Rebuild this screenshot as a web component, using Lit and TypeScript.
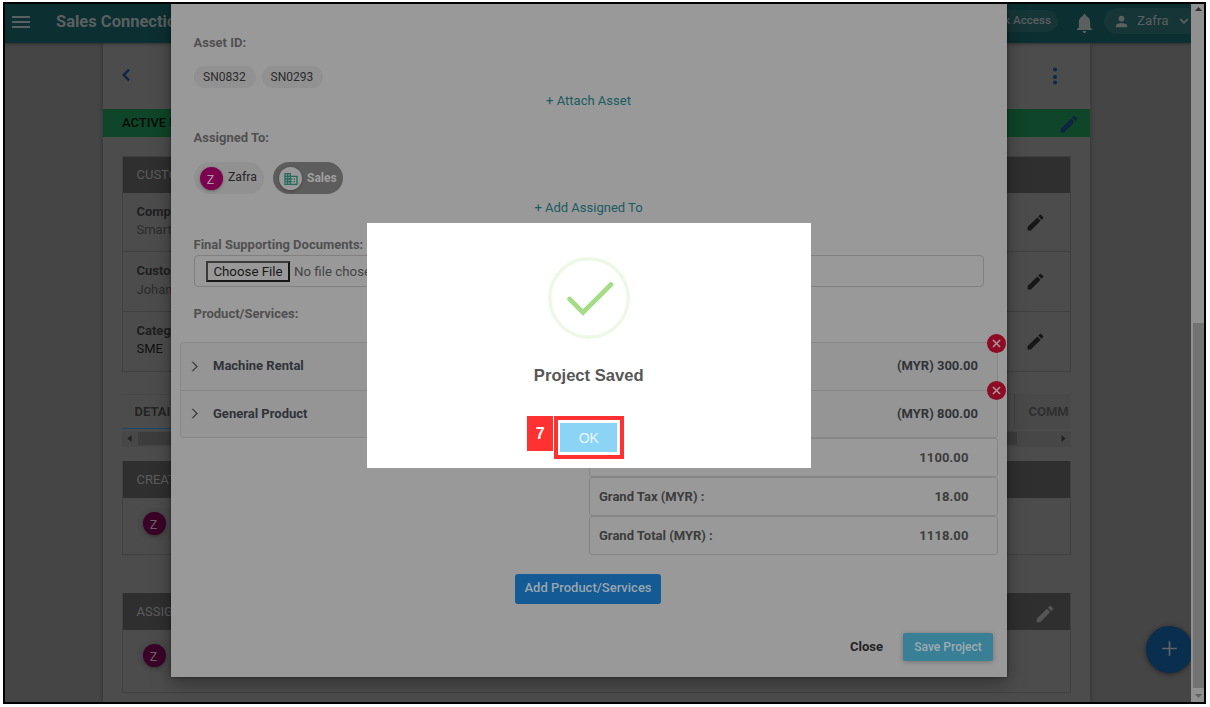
import { LitElement, html, css, svg } from "lit";
import { customElement } from "lit/decorators.js";

const pencilPath = "M3 17.25V21h3.75L17.81 9.94l-3.75-3.75L3 17.25zM20.71 7.04a1 1 0 0 0 0-1.41l-2.34-2.34a1 1 0 0 0-1.41 0l-1.83 1.83 3.75 3.75 1.83-1.83z";
const icon = (cls: string, path: string) =>
  html`<svg class=${"ic " + cls} viewBox="0 0 24 24">${svg`<path d=${path}></path>`}</svg>`;

@customElement("app-root")
export class AppRoot extends LitElement {
  static styles = css`
    :host { display: block; width: 1210px; height: 707px; box-sizing: border-box; padding: 2px 4px 3px 3px; background: #fff; overflow: hidden; font-family: Roboto, "Liberation Sans", sans-serif; font-size: 13px; color: #1d1d1d; }
    * { box-sizing: border-box; }
    .frame { position: relative; display: flex; width: 1203px; height: 702px; border: 2px solid #000; background: #454545; overflow: hidden; white-space: nowrap; }
    .ic { display: block; width: 20px; height: 20px; fill: currentColor; flex: none; }
    .view { position: relative; width: 1186px; height: 698px; overflow: hidden; flex: none; }
    .top { position: relative; display: flex; align-items: center; height: 39px; background: #0c2f31; color: #5a6061; box-shadow: 0 1px 3px rgba(0,0,0,.35); z-index: 1; }
    .burger { width: 18px; height: 12px; margin: 0 26px 4px 7px; border: solid #5a6061; border-width: 2px 0; display: flex; align-items: center; flex: none; }
    .burger i { display: block; height: 2px; width: 18px; background: #5a6061; }
    .brand { font-size: 16.5px; font-weight: 700; width: 870px; margin-bottom: 5px; flex: none; }
    .quick { width: 132px; text-align: right; height: 22px; line-height: 21px; border-radius: 11px; background: #163537; padding-right: 7px; margin-bottom: 5px; font-size: 11.6px; font-weight: 500; flex: none; }
    .bell { margin: 0 12px 1px 19px; width: 15px; height: 19px; }
    .user { display: flex; align-items: center; height: 26px; width: 96px; border-radius: 13px; background: #163537; padding-left: 9px; margin-bottom: 5px; font-size: 14px; flex: none; }
    .user .ic { width: 17px; height: 17px; }
    .user span { margin: 0 7px 2px 7px; font-size: 13.4px; }
    .user .dn { width: 16px; height: 16px; stroke: currentColor; }
    .sheet { width: 987px; height: 662px; margin-left: 98px; background: #4c4c4c; box-shadow: 0 0 5px rgba(0,0,0,.3); }
    .nav { display: flex; justify-content: space-between; align-items: center; height: 66px; padding: 0 23px 3px 11px; color: #0e2747; }
    .nav .ic { width: 24px; height: 24px; }
    .active { display: flex; align-items: center; justify-content: space-between; height: 28px; background: #0f4528; padding: 0 10px 2px 19px; font-size: 13px; font-weight: 500; color: #050b08; }
    .active .ic { width: 22px; height: 22px; color: #0f2440; margin-top: 4px; }
    .card { width: 949px; margin: 19px 19px 0 18.5px; border: 1px solid #404040; }
    .hd { display: flex; align-items: center; justify-content: space-between; height: 36.5px; margin: -.5px 0 0 0; padding: 0 15px 0 14px; background: #2f2f2f; color: #5d5d5d; font-size: 13px; }
    .row { display: flex; align-items: center; justify-content: space-between; height: 59.4px; border-bottom: 1px solid #404040; padding: 0 23.5px 2px 14px; line-height: 18.5px; color: #2b2b2b; }
    .row:last-child { border-bottom: 0; height: 59px; }
    .row b { display: block; font-weight: 700; color: #1f1f1f; }
    .row .ic { width: 21px; height: 21px; color: #171717; margin-top: 2px; }
    .row .dark { color: #111; }
    .tabs { display: flex; justify-content: space-between; width: 949px; height: 35px; margin: 22px 19px 0 18.5px; border-top: 1px solid #484848; font-weight: 700; line-height: 34px; color: #242424; }
    .tabs .cur { width: 140px; padding-left: 13px; border-bottom: 1px solid #17476c; }
    .tabs .com { width: 57px; padding-left: 14px; border-left: 1px solid #424242; color: #2f2f2f; background: #494949; }
    .hscroll { display: flex; align-items: center; width: 949px; height: 16px; margin: 2px 19px 0 18.5px; background: #474747; color: #222; }
    .hscroll .th { width: 879px; height: 13px; background: #3c3c3c; margin: 0 44px 0 6px; }
    .hscroll .l { margin-left: 5px; }
    .tri { width: 5px; height: 7px; fill: currentColor; flex: none; }
    .c2 { margin-top: 14px; height: 94px; }
    .c3 { margin-top: 38px; height: 100px; }
    .c3 .ic { width: 22px; height: 22px; color: #555; margin: 4px -1px 0 0; }
    .who { display: flex; align-items: center; width: 90px; height: 32px; border-radius: 16px; background: #494949; margin: 10px 0 0 14.5px; padding-left: 6px; }
    .av { width: 23px; height: 23px; border-radius: 50%; background: #3b0228; color: #6f5f69; text-align: center; line-height: 25px; font-size: 12.5px; box-shadow: 0 1px 3px rgba(0,0,0,.3); padding-right: 2px; }
    .fab { position: absolute; left: 1141px; top: 621.5px; width: 47px; height: 47px; border-radius: 50%; background: #0a2e4e; color: #5f6468; display: flex; align-items: center; justify-content: center; box-shadow: 0 1px 5px rgba(0,0,0,.5); }
    .fab .ic { width: 25px; height: 25px; margin: 0 1px 1px 0; }
    .vscroll { display: flex; flex-direction: column; align-items: center; width: 13px; height: 698px; background: #909090; padding-top: 3px; }
    .vscroll .th { width: 11px; height: 365px; margin: 312px 0 0 2px; background: #737373; flex: none; }
    .vt { width: 7px; height: 4px; fill: #303030; margin-left: 2px; flex: none; }
    .vt.b { margin-top: 6px; fill: #606060; }
    .modal { position: absolute; z-index: 2; left: 166px; top: 0; width: 836px; height: 673px; background: #999; box-shadow: 0 6px 18px rgba(0,0,0,.35), 0 0 3px rgba(0,0,0,.4); padding: 29px 9px 0; color: #4a4a4a; }
    .lab { height: 20px; line-height: 20px; margin-left: 13.5px; font-weight: 700; color: #505050; }
    .chips { display: flex; align-items: center; margin-left: 14px; }
    .chip { height: 22px; border-radius: 11px; background: #919191; padding: 0 9px; line-height: 22px; font-size: 12px; color: #2a2a2a; margin-right: 6px; width: 61.5px; }
    .link { text-align: center; height: 20px; line-height: 20px; color: #1b5b62; font-size: 13px; padding-right: 1px; }
    .person { display: flex; align-items: center; height: 32px; width: 70px; border-radius: 16px; background: #919191; padding: 0 6px; color: #252525; margin-right: 9px; font-size: 12.3px; }
    .person .av { background: #7c0250; color: #ab99a5; margin-right: 5px; flex: none; }
    .person .txt { margin-bottom: 2px; }
    .person.s { background: #5d5d5d; color: #a0a0a0; font-weight: 700; font-size: 12px; }
    .person.s .txt { margin-bottom: 1px; }
    .person.s .av { background: #999; color: #276b5c; display: flex; align-items: center; justify-content: center; padding: 2px 0 0; }
    .person.s .ic { width: 16px; height: 16px; }
    .file { display: flex; align-items: center; width: 790px; height: 32px; margin: 0 0 0 14px; border: 1px solid #808080; border-radius: 4px; padding-left: 11px; font-size: 13.3px; color: #444; }
    .choose { width: 84px; height: 21px; border: 2px solid #161616; border-top-color: #3a3a3a; border-left-color: #3a3a3a; text-align: center; line-height: 17px; margin-right: 4px; color: #171717; }
    .acc { width: 818px; height: 96px; border: 1px solid #888; border-radius: 3px; background: #959595; font-weight: 700; color: #303338; }
    .it { position: relative; display: flex; align-items: center; height: 47px; padding: 0 19px 1.5px 6px; }
    .it + .it { border-top: 1px solid #888; }
    .it .ic { width: 15px; height: 15px; margin: 1px 11px 0 0; color: #303030; stroke: currentColor; stroke-width: .6; }
    .it .grow { flex: 1; }
    .x { position: absolute; right: -9px; top: -9.5px; width: 19px; height: 19px; border-radius: 50%; background: #8d0b25; display: flex; align-items: center; justify-content: center; z-index: 1; }
    .it + .it .x { top: -10px; }
    .it .x .ic { width: 13px; height: 13px; color: #b0a0a3; margin: 0 1px 0 0; stroke: currentColor; stroke-width: .8; }
    .sum { width: 409px; margin-left: 409px; font-weight: 700; color: #3c3c3c; }
    .sum div { display: flex; align-items: center; justify-content: space-between; height: 39px; border: 1px solid #858585; border-radius: 3px; padding: 0 28.5px 1px 9px; }
    .sum em { font-style: normal; letter-spacing: .1px; }
    .add { width: 146px; height: 30px; margin: 19px 0 0 335px; border-radius: 3px; background: #145a94; color: #9aa6af; font-weight: 500; line-height: 28px; text-align: center; }
    .foot { display: flex; justify-content: flex-end; align-items: center; margin: 29px 5px 0 0; height: 28px; font-weight: 700; color: #222; }
    .foot .close { margin-bottom: 2px; }
    .save { width: 90px; height: 28px; margin-left: 20px; border-radius: 2px; background: #398097; color: #9eabaf; font-weight: 500; font-size: 12.1px; line-height: 28px; text-align: center; box-shadow: 0 1px 5px rgba(0,0,0,.25); }
    .alert { position: absolute; z-index: 3; left: 361.5px; top: 218.5px; width: 444.5px; height: 245px; background: #fff; font-family: "Liberation Sans", sans-serif; display: flex; flex-direction: column; align-items: center; padding-top: 34px; }
    .tick { width: 82px; height: 82px; display: block; flex: none; }
    .ttl { font-size: 16.6px; font-weight: 700; color: #575757; height: 20px; line-height: 20px; margin-top: 27px; }
    .mark { position: relative; width: 70px; height: 43px; border: 4px solid #ff3131; margin-top: 30px; padding: 3px 2px 0 2.5px; }
    .ok { width: 57px; height: 29px; background: #8cd4f5; color: #e9f7fd; font-size: 14px; text-align: center; line-height: 30px; }
    .seven { position: absolute; left: -30.5px; top: -4px; width: 26px; height: 35px; background: #ff3131; color: #fff; font-size: 16px; font-weight: 700; text-align: center; line-height: 36px; }
    .g3 { margin-top: 3px; }
    .g4 { margin-top: 4px; }
    .g17 { margin-top: 17px; }
    .g13 { margin-top: 13px; }
    .g14 { margin-top: 14px; }
    .prod { margin-top: 17px; margin-bottom: 18px; }
  `;

  private card(name: string, value: string, dark = false) {
    return html`<div class="row"><div><b>${name}</b><span class=${dark ? "dark" : ""}>${value}</span></div>${icon("", pencilPath)}</div>`;
  }

  private item(name: string, price: string) {
    return html`<div class="it">
      ${icon("", "M8.3 5.3 9.3 4.3 17 12 9.3 19.7 8.3 18.7 15 12z")}
      <span class="grow">${name}</span><span>${price}</span>
      <div class="x">${icon("", "M19 6.41 17.59 5 12 10.59 6.41 5 5 6.41 10.59 12 5 17.59 6.41 19 12 13.41 17.59 19 19 17.59 13.41 12z")}</div>
    </div>`;
  }

  render() {
    return html`<div class="frame">
      <div class="view">
        <div class="top">
          <div class="burger"><i></i></div>
          <div class="brand">Sales Connectio</div>
          <div class="quick">k Access</div>
          <svg class="ic bell" viewBox="4 2.500 16 19.500" preserveAspectRatio="none"><path d="M12 22c1.1 0 2-.9 2-2h-4c0 1.1.9 2 2 2zm6-6v-5c0-3.07-1.63-5.64-4.5-6.32V4a1.5 1.5 0 0 0-3 0v.68C7.64 5.36 6 7.92 6 11v5l-2 2v1h16v-1l-2-2z"></path></svg>
          <div class="user">
            ${icon("", "M12 12a4 4 0 1 0 0-8 4 4 0 0 0 0 8zm0 2c-2.67 0-8 1.34-8 4v2h16v-2c0-2.66-5.33-4-8-4z")}
            <span>Zafra</span>
            ${icon("dn", "M7.41 8.59 12 13.17l4.59-4.58L18 10l-6 6-6-6z")}
          </div>
        </div>
        <div class="sheet">
          <div class="nav">
            ${icon("", "M15.9 7.41 14.2 5.7 8 12l6.2 6.3 1.7-1.71L11.3 12z")}
            ${icon("", "M12 8.600a2 2 0 1 0 0-4 2 2 0 0 0 0 4zm0 3.4a2 2 0 1 0 0 4 2 2 0 0 0 0-4zm0 5.400a2 2 0 1 0 0 4 2 2 0 0 0 0-4z")}
          </div>
          <div class="active"><span>ACTIVE I</span>${icon("", pencilPath)}</div>
          <div class="card">
            <div class="hd">CUSTO</div>
            ${this.card("Comp", "Smart")}
            ${this.card("Custo", "Johan")}
            ${this.card("Categ", "SME", true)}
          </div>
          <div class="tabs"><span class="cur">DETAI</span><span class="com">COMM</span></div>
          <div class="hscroll">
            <svg class="tri l" viewBox="0 0 5 7"><path d="M4.5 0v7L.5 3.5z"></path></svg>
            <div class="th"></div>
            <svg class="tri" viewBox="0 0 5 7"><path d="M.5 0v7l4-3.500z"></path></svg>
          </div>
          <div class="card c2"><div class="hd">CREAT</div><div class="who"><div class="av">Z</div></div></div>
          <div class="card c3"><div class="hd"><span>ASSIG</span>${icon("", pencilPath)}</div><div class="who"><div class="av">Z</div></div></div>
        </div>
        <div class="fab">${icon("", "M19 12.800h-6.200V19h-1.600v-6.200H5v-1.600h6.200V5h1.600v6.200H19z")}</div>

        <div class="modal">
          <div class="lab">Asset ID:</div>
          <div class="chips g13"><div class="chip">SN0832</div><div class="chip">SN0293</div></div>
          <div class="link g3">+ Attach Asset</div>
          <div class="lab g17">Assigned To:</div>
          <div class="chips g14">
            <div class="person"><div class="av">Z</div><span class="txt">Zafra</span></div>
            <div class="person s"><div class="av">${icon("", "M12 7V3H2v18h20V7H12zM6 19H4v-2h2v2zm0-4H4v-2h2v2zm0-4H4V9h2v2zm0-4H4V5h2v2zm4 12H8v-2h2v2zm0-4H8v-2h2v2zm0-4H8V9h2v2zm0-4H8V5h2v2zm10 12h-8v-2h2v-2h-2v-2h2v-2h-2V9h8v10zm-2-8h-2v2h2v-2zm0 4h-2v2h2v-2z")}</div><span class="txt">Sales</span></div>
          </div>
          <div class="link g4">+ Add Assigned To</div>
          <div class="lab g17">Final Supporting Documents:</div>
          <div class="file"><span class="choose">Choose File</span>No file chosen</div>
          <div class="lab prod">Product/Services:</div>
          <div class="acc">
            ${this.item("Machine Rental", "(MYR) 300.00")}
            ${this.item("General Product", "(MYR) 800.00")}
          </div>
          <div class="sum">
            <div><span></span><em>1100.00</em></div>
            <div><span>Grand Tax (MYR) :</span><em>18.00</em></div>
            <div><span>Grand Total (MYR) :</span><em>1118.00</em></div>
          </div>
          <div class="add">Add Product/Services</div>
          <div class="foot"><span class="close">Close</span><span class="save">Save Project</span></div>
        </div>

        <div class="alert">
          <svg class="tick" viewBox="0 0 82 82" fill="none">
            <circle cx="41" cy="41" r="39.200" stroke="#edf8e7" stroke-width="3.500"></circle>
            <path d="M21.500 42 35 55.500 63 27.500" stroke="#a5dc86" stroke-width="4.600" stroke-linecap="round"></path>
          </svg>
          <div class="ttl">Project Saved</div>
          <div class="mark"><div class="seven">7</div><div class="ok">OK</div></div>
        </div>
      </div>
      <div class="vscroll">
        <svg class="vt" viewBox="0 0 7 4"><path d="M0 4 3.500 0 7 4z"></path></svg>
        <div class="th"></div>
        <svg class="vt b" viewBox="0 0 7 4"><path d="M0 0 3.500 4 7 0z"></path></svg>
      </div>
    </div>`;
  }
}
